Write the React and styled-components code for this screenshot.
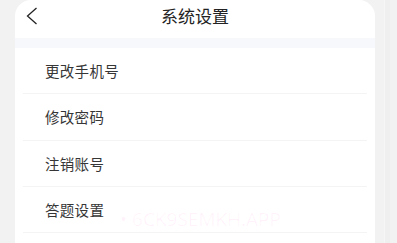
import React from "react";
import styled, { createGlobalStyle } from "styled-components";

const Global = createGlobalStyle`
  html, body { margin: 0; padding: 0; background: #f2f2f2; }
  body { font-family: "Noto Sans CJK SC", "Noto Sans", sans-serif; overflow: hidden; }
`;

const Page = styled.div`
  position: relative;
  width: 397px;
  height: 243px;
  display: flex;
  overflow: hidden;
`;

const Card = styled.div`
  margin-left: 15px;
  width: 360px;
  background: #ffffff;
  border-radius: 16px 16px 0 0;
  display: flex;
  flex-direction: column;
`;

const Gutter = styled.div`
  flex: 1;
  display: flex;
  justify-content: flex-end;
  padding-right: 7px;
`;

const Track = styled.div`
  width: 5px;
  background: #efefef;
  border-left: 1px solid #f6f6f6;
`;

const Header = styled.div`
  height: 38px;
  display: grid;
  grid-template-columns: 40px 1fr 40px;
  align-items: center;
`;

const Back = styled.div`
  display: flex;
  align-items: center;
  justify-content: flex-start;
  padding-left: 11px;
  padding-bottom: 6px;
`;

const Title = styled.div`
  text-align: center;
  font-size: 17px;
  color: #222;
  padding-bottom: 7px;
`;

const Band = styled.div`
  height: 10px;
  background: #f7f8fc;
`;

const List = styled.div`
  padding: 0 8px;
  display: flex;
  flex-direction: column;
`;

const Row = styled.div`
  height: 46.3px;
  display: flex;
  align-items: center;
  padding-left: 22px;
  font-size: 14.5px;
  color: #363636;
  border-bottom: 1px solid #f4f4f4;
  box-sizing: border-box;
  letter-spacing: 0.3px;
`;

const Watermark = styled.div`
  position: absolute;
  left: 120px;
  top: 206px;
  font-family: "Open Sans", "Noto Sans", sans-serif;
  font-size: 19px;
  color: rgba(255, 60, 180, 0.06);
  white-space: nowrap;
`;

const items = ["更改手机号", "修改密码", "注销账号", "答题设置"];

export default function App() {
  return (
    <Page>
      <Global />
      <Card>
        <Header>
          <Back>
            <svg width="12" height="18" viewBox="0 0 12 18">
              <path d="M10.5 1 L1.5 9 L10.5 17" fill="none" stroke="#222" strokeWidth="1.3" />
            </svg>
          </Back>
          <Title>系统设置</Title>
          <div />
        </Header>
        <Band />
        <List>
          {items.map((t) => (
            <Row key={t}>{t}</Row>
          ))}
        </List>
      </Card>
      <Gutter>
        <Track />
      </Gutter>
      <Watermark>• 6CK9SEMKH.APP</Watermark>
    </Page>
  );
}
